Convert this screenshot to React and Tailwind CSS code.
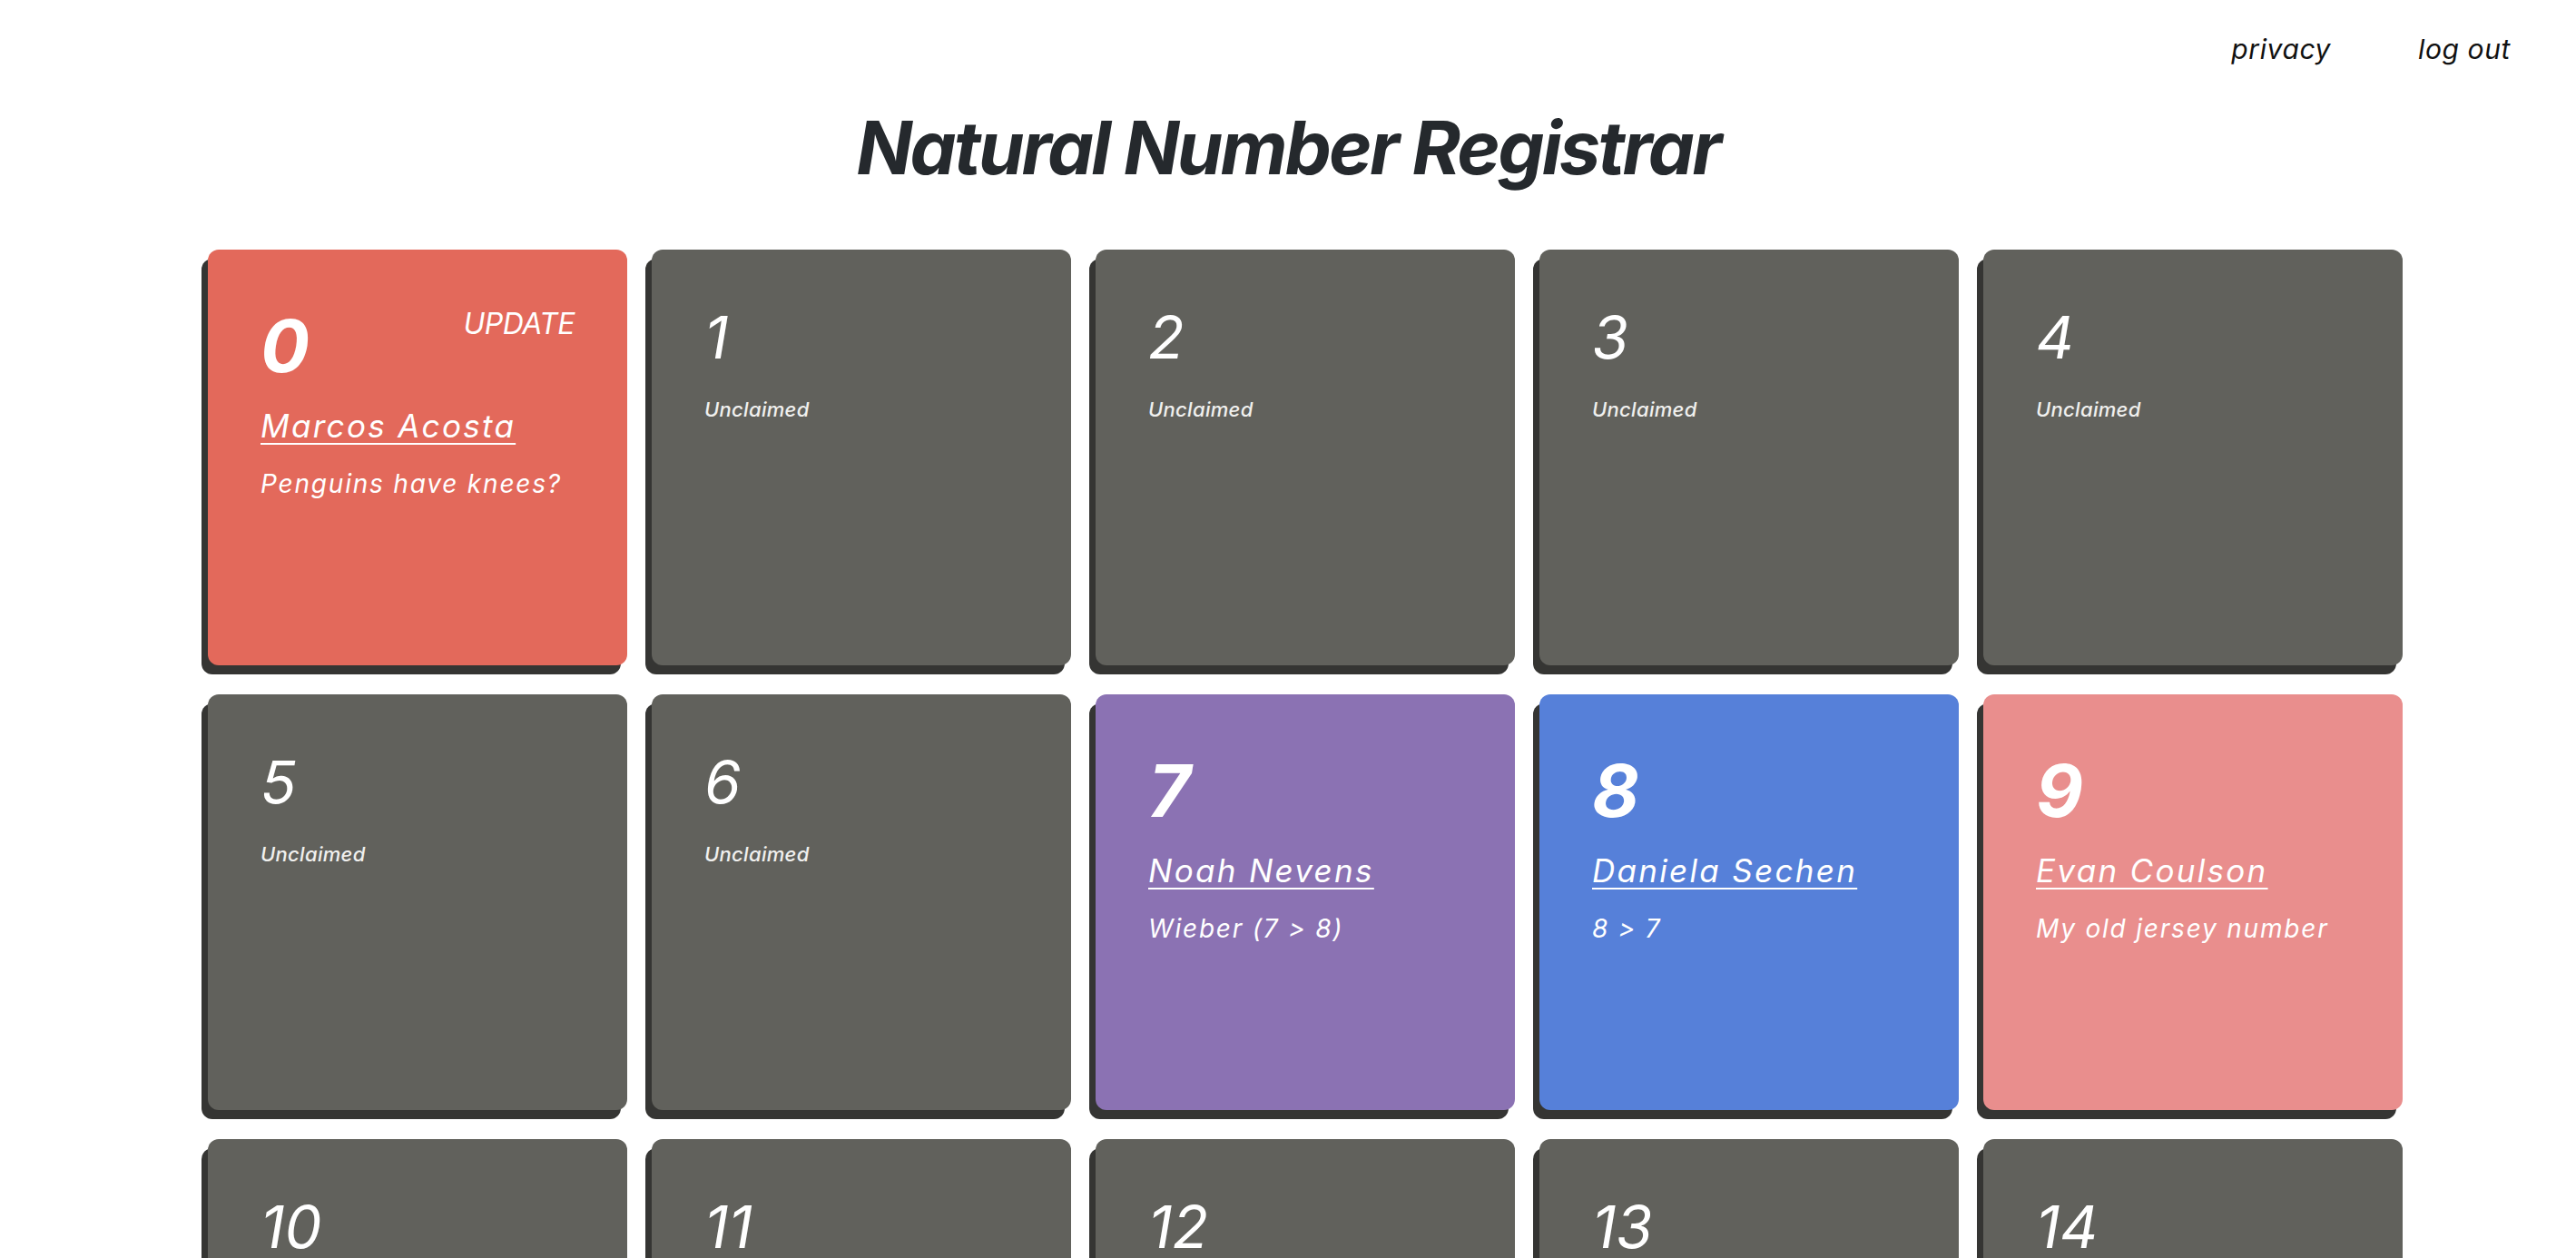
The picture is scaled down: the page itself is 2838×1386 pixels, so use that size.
import React from 'react';

const claims = {
    0: { name: 'Marcos Acosta', note: 'Penguins have knees?', color: 'bg-[#e3695b]', mine: true },
    7: { name: 'Noah Nevens', note: 'Wieber (7 > 8)', color: 'bg-[#8b72b3]' },
    8: { name: 'Daniela Sechen', note: '8 > 7', color: 'bg-[#5680d9]' },
    9: { name: 'Evan Coulson', note: 'My old jersey number', color: 'bg-[#e98e8d]' },
};

const NumberCard = ({ n }) => {
    const claim = claims[n];

    if (!claim) {
        return (
            <div className="h-[458px] rounded-[12px] bg-[#61615c] pt-[64px] px-[58px] text-white shadow-[-7px_10px_0_#353533]">
                <div className="text-[65px] leading-none italic">{n}</div>
                <div className="mt-[36px] text-[22px] leading-none italic font-medium tracking-[0.3px] text-[#f0f0ee]">Unclaimed</div>
            </div>
        );
    }

    return (
        <div className={`h-[458px] rounded-[12px] ${claim.color} pt-[66px] px-[58px] text-white shadow-[-7px_10px_0_#353533]`}>
            <div className="flex items-start justify-between">
                <div className="text-[80px] leading-none italic font-bold">{n}</div>
                {claim.mine && (
                    <button className="text-[32px] leading-none italic tracking-[-0.5px] cursor-pointer">UPDATE</button>
                )}
            </div>
            <a href="#" className="block w-fit mt-[31px] text-[35px] leading-none italic tracking-[2.3px] underline underline-offset-[6px] decoration-2">
                {claim.name}
            </a>
            <div className="mt-[32px] text-[28px] leading-none italic tracking-[1.8px]">{claim.note}</div>
        </div>
    );
};

export default function App() {
    const numbers = Array.from({ length: 20 }, (_, i) => i);

    return (
        <div className="min-h-screen bg-white font-['Inter','Liberation_Sans',sans-serif] text-[#25292d]">
            {/* top links */}
            <nav className="flex justify-end gap-[96px] pt-[39px] pr-[72px] text-[30px] leading-none italic tracking-[0.6px] text-[#111]">
                <a href="#">privacy</a>
                <a href="#">log out</a>
            </nav>

            <h1 className="mt-[54px] text-center text-[81px] leading-none font-bold italic tracking-[-2.75px]">
                Natural Number Registrar
            </h1>

            <div className="mt-[71px] pl-[229px] pb-24 grid grid-cols-[repeat(5,462px)] gap-x-[27px] gap-y-[32px]">
                {numbers.map((n) => (
                    <NumberCard key={n} n={n} />
                ))}
            </div>
        </div>
    );
}
